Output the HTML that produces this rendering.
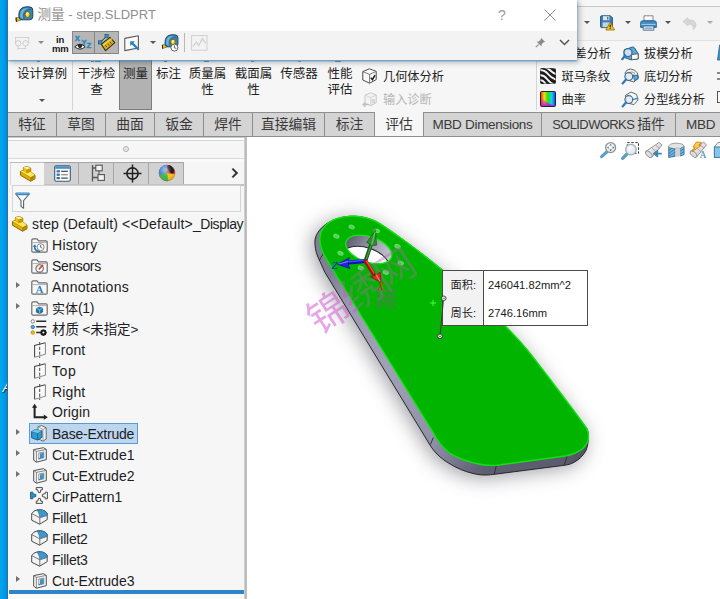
<!DOCTYPE html>
<html><head><meta charset="utf-8">
<style>
*{box-sizing:border-box;margin:0;padding:0}
html,body{width:720px;height:599px;overflow:hidden;background:#fff}
body{position:relative;font-family:"Liberation Sans","Noto Sans CJK SC",sans-serif;font-size:14px;color:#222}
.abs{position:absolute}
svg{position:absolute;overflow:visible}
#strip{left:0;top:0;width:8px;height:599px;background:linear-gradient(90deg,#00a8ee 0,#0098e8 60%,#0088dc 88%,#3a6c94 94%,#dfe6ec 100%)}
#app{left:8px;top:0;width:712px;height:599px;background:#f6f6f6}
#qat{left:577px;top:6px;width:143px;height:35px;background:#f3f3f3;border-top:1px solid #c8c8c8;border-bottom:1px solid #e2e2e2}
#ribbon{left:8px;top:41px;width:712px;height:71px;background:#f6f6f6}
#tabs{left:8px;top:112px;width:712px;height:25px;background:#d4d4d4;border-top:1px solid #8e8e8e;border-bottom:1px solid #9a9a9a}
.tab{position:absolute;top:0;height:23px;border-right:1px solid #8e8e8e;text-align:center;font-size:13.8px;line-height:24.6px;color:#3a3a3a;white-space:nowrap}
.tab.act{background:#f6f6f6;top:-1px;height:25px;padding-top:1px}
.tab.en{font-size:13.5px;letter-spacing:-0.3px}
#dlg{left:8px;top:0;width:569px;height:60px;background:#f3f3f3;box-shadow:0 1px 1.5px rgba(60,150,210,.9),2px 2px 6px rgba(0,0,0,.3)}
#dlgtitle{left:0;top:0;width:569px;height:31px;background:#fff}
#panel{left:8px;top:136px;width:237px;height:463px;background:#f6f6f6}
#vsep{left:244px;top:136px;width:3px;height:463px;background:linear-gradient(90deg,#dcdcdc,#b8b8b8 50%,#c8c8c8)}
#view{left:247px;top:136px;width:473px;height:463px;background:#fff}
.row{position:absolute;left:44px;height:21px;line-height:21px;margin-top:.8px;font-size:14px;white-space:nowrap;color:#1c1c24;transform-origin:0 50%}
.rb{position:absolute;font-size:12.5px;line-height:16.4px;margin-top:.3px;text-align:center;color:#222;white-space:nowrap;transform:translateX(-50%)}
.rl{position:absolute;margin-top:.8px;font-size:12.2px;line-height:16px;color:#222;white-space:nowrap}
.exp{position:absolute;left:8.4px;margin-top:-.6px;width:0;height:0;border-left:4px solid #707070;border-top:3.5px solid transparent;border-bottom:3.5px solid transparent}
.dd{position:absolute;width:0;height:0;border-top:3.5px solid #555;border-left:3px solid transparent;border-right:3px solid transparent}
.ptab{position:absolute;top:26px;height:23px;width:35px;background:#d2d2d2;border:1px solid #a6a6a6;border-left:none}
.co{font-size:11.2px;line-height:16px;color:#1a1a1a;white-space:nowrap}
</style></head><body>
<div id="strip" class="abs"></div>
<div class="abs" style="left:0;top:380px;width:7.4px;height:16px;overflow:hidden"><span style="position:absolute;left:2.6px;top:0;font-size:13px;line-height:16px;color:#fff;text-shadow:.6px .8px .8px #201000;font-style:italic">A</span></div>
<div id="app" class="abs"></div>
<div id="qat" class="abs"></div>
<div id="ribbon" class="abs">
<!--RB0--><div class="abs" style="left:29px;top:19.6px;width:3px;height:1.4px;background:#555;opacity:.6"></div>
<div class="abs" style="left:83px;top:19.6px;width:3px;height:1.4px;background:#d04030;opacity:.7"></div>
<div class="abs" style="left:87px;top:19.6px;width:6px;height:1.4px;background:#2a6a9a;opacity:.7"></div>
<div class="abs" style="left:120px;top:19.6px;width:3px;height:1.6px;background:#444;opacity:.6"></div>
<div class="abs" style="left:156px;top:19.6px;width:3px;height:1.4px;background:#444;opacity:.6"></div>
<div class="abs" style="left:196px;top:19.6px;width:5px;height:1.6px;background:#2a6a9a;opacity:.7"></div>
<div class="abs" style="left:243px;top:19.6px;width:3px;height:1.4px;background:#555;opacity:.6"></div>
<div class="abs" style="left:290px;top:19.6px;width:3px;height:1.4px;background:#555;opacity:.5"></div>
<div class="abs" style="left:327px;top:19.6px;width:6px;height:1.6px;background:#444;opacity:.6"></div>
<!-- ribbon origin abs (8,41) -->
<div class="abs" style="left:111px;top:18px;width:33px;height:51px;background:#b2b2b2;border:1px solid #7e7e7e"></div>
<div class="abs" style="left:64px;top:20px;width:1px;height:49px;background:#d4d4d4"></div>
<div class="abs" style="left:528px;top:20px;width:1px;height:49px;background:#d4d4d4"></div>
<div class="rb" style="left:34px;top:24.5px">设计算例</div>
<div class="dd" style="left:31px;top:58px"></div>
<div class="rb" style="left:88.5px;top:24.5px">干涉检<br>查</div>
<div class="rb" style="left:127.5px;top:24.5px">测量</div>
<div class="rb" style="left:160.5px;top:24.5px">标注</div>
<div class="rb" style="left:199.5px;top:24.5px">质量属<br>性</div>
<div class="rb" style="left:245.5px;top:24.5px">截面属<br>性</div>
<div class="rb" style="left:291px;top:24.5px">传感器</div>
<div class="rb" style="left:332px;top:24.5px">性能<br>评估</div>
<div class="rl" style="left:375px;top:27px">几何体分析</div>
<div class="rl" style="left:375px;top:50px;color:#b4b4b4">输入诊断</div>
<div class="rl" style="left:566.5px;top:4px">差分析</div>
<div class="rl" style="left:636px;top:4px">拔模分析</div>
<div class="rl" style="left:553.5px;top:27px">斑马条纹</div>
<div class="rl" style="left:636px;top:27px">底切分析</div>
<div class="rl" style="left:553.5px;top:50px">曲率</div>
<div class="rl" style="left:636px;top:50px">分型线分析</div>
<!-- geometry analysis icon abs 362..376 x 68..83 -->
<svg style="left:354px;top:27px" width="15" height="16" viewBox="0 0 15 16"><path d="M.8 3.6 L7.4 .8 L14.2 3.4 V11.6 L7.6 15.2 L.8 12Z" fill="#fafafa" stroke="#4a4a4a" stroke-width="1" stroke-linejoin="round"/><path d="M.8 3.6 L7.6 6.4 L14.2 3.4 M7.6 6.4 V15.2" fill="none" stroke="#6a6a6a" stroke-width=".9"/><path d="M8.8 9.6 L10.4 11.6 L13 7.2" fill="none" stroke="#1a1a1a" stroke-width="1.5"/></svg>
<svg style="left:354px;top:51px;opacity:.5" width="15" height="16" viewBox="0 0 15 16"><path d="M3 3.2 L8.6 .8 L14.2 3 V10.6 L8.8 13.6 L3 11Z" fill="#f4f4f4" stroke="#9a9a9a" stroke-width="1" stroke-linejoin="round"/><path d="M3 3.2 L8.8 5.6 L14.2 3 M8.8 5.6 V13.6" fill="none" stroke="#aaa" stroke-width=".9"/><path d="M7 12.6 H1.4 M3.4 10.4 L1 12.6 L3.4 14.8" fill="none" stroke="#8a8a8a" stroke-width="1.3"/><rect x="9.6" y="7" width="3.4" height="4.4" fill="#bbb"/></svg>
<!-- zebra icon abs 540..555.5 x 68..83.3 -->
<svg style="left:532px;top:27px" width="16" height="16" viewBox="0 0 16 16"><defs><clipPath id="zc"><rect x=".5" y=".5" width="15" height="15" rx="1"/></clipPath></defs><rect x=".5" y=".5" width="15" height="15" rx="1" fill="#1c1c1c" stroke="#2a2a2a" stroke-width="1"/><g clip-path="url(#zc)" fill="none" stroke="#f4f4f4" stroke-width="1.9"><path d="M-1 2 Q5 2 8 6 T17 12"/><path d="M-1 7 Q4 7 7 11 T15 17"/><path d="M-1 12 Q3 12 5 15 T9 19"/><path d="M4 -1 Q8 0 11 3 T17 6"/><path d="M10 -1 Q13 -1 17 1"/></g></svg>
<!-- curvature icon abs 540..555.5 x 91..106.4 -->
<svg style="left:532px;top:50px" width="16" height="16" viewBox="0 0 16 16"><defs><linearGradient id="cg1" x1="0" y1="0" x2="1" y2="0"><stop offset="0" stop-color="#ff1e1e"/><stop offset=".25" stop-color="#f0e000"/><stop offset=".5" stop-color="#20e020"/><stop offset=".75" stop-color="#10d0f0"/><stop offset="1" stop-color="#2030ff"/></linearGradient><linearGradient id="cg2" x1="0" y1="0" x2="0" y2="1"><stop offset="0" stop-color="#ff00c0" stop-opacity="0"/><stop offset="1" stop-color="#c000ff" stop-opacity=".85"/></linearGradient></defs><rect x=".5" y=".5" width="15" height="15" rx="1" fill="url(#cg1)" stroke="#222" stroke-width="1"/><path d="M1 15 L1 6 Q6 12 15 15Z" fill="url(#cg2)"/></svg>
<!-- draft / undercut / parting line analysis icons abs x 621..638 -->
<svg style="left:613px;top:4px" width="18" height="16" viewBox="0 0 18 16"><path d="M3.2 4.8 L11.6 2 Q13 2 13.6 3 L17.2 8.8 V13.8 L10 14.8 L3 12.4Z" fill="#5ea6d6" stroke="#1f5f8e" stroke-width="1" stroke-linejoin="round"/><path d="M10.6 9.6 L17.2 8.8 V13.8 L10.6 14.8Z" fill="#fdfdfd" stroke="#4a4a4a" stroke-width=".8"/><circle cx="7" cy="7.6" r="4" fill="#d8ecf8" fill-opacity=".85" stroke="#3a6a90" stroke-width="1.2"/><path d="M4.2 10.6 L1.2 14.2" stroke="#2d78b8" stroke-width="2.2" stroke-linecap="round"/></svg>
<svg style="left:613px;top:27px" width="18" height="17" viewBox="0 0 18 17"><path d="M4 5 Q5 1.4 9.6 1 Q14 1.2 16.4 5 L17.4 10 L13 14 L6 12Z" fill="#f0f0f0" stroke="#6a6a6a" stroke-width="1" stroke-linejoin="round"/><path d="M12.4 7 L17 7.6 L17 11 L13.4 12.6Z" fill="#5ea6d6" stroke="#1f5f8e" stroke-width=".8"/><path d="M8 4.6 Q11 3 14 5.4" fill="none" stroke="#888" stroke-width=".8"/><circle cx="7.8" cy="8.6" r="3.9" fill="#d8ecf8" fill-opacity=".85" stroke="#4a6a86" stroke-width="1.2"/><path d="M5 11.6 L1.6 15.4" stroke="#2d78b8" stroke-width="2.2" stroke-linecap="round"/></svg>
<svg style="left:613px;top:50px" width="18" height="17" viewBox="0 0 18 17"><path d="M4.4 4.4 L10 1 L15.6 3.4 L17 9 L13 13.6 L6 12Z" fill="#f4f4f4" stroke="#6a6a6a" stroke-width="1" stroke-linejoin="round"/><path d="M11.6 8.6 L17.2 7.2" stroke="#3a8cc8" stroke-width="1.4"/><circle cx="7.8" cy="8.6" r="3.9" fill="#d8ecf8" fill-opacity=".85" stroke="#4a6a86" stroke-width="1.2"/><path d="M5 11.6 L1.6 15.4" stroke="#2d78b8" stroke-width="2.2" stroke-linecap="round"/></svg>
<!-- far right partial icons -->
<svg style="left:708.6px;top:3px" width="6" height="17" viewBox="0 0 6 17"><path d="M2.6 1 L6 1 V16 H0.5Z" fill="#3f8fc6" stroke="#1f5f90" stroke-width=".8"/></svg>
<div class="abs" style="left:709px;top:31px;width:4px;height:1.5px;background:#888"></div>
<div class="abs" style="left:709px;top:37px;width:4px;height:1.5px;background:#888"></div>

<div class="abs" style="left:708.6px;top:50px;width:8px;height:12px;border:1px solid #555;background:#fafafa"></div>
<!--RB1-->
</div>
<div id="qaticons" class="abs" style="left:0;top:0;width:720px;height:45px">
<div class="dd" style="left:583.7px;top:21px"></div>
<div class="dd" style="left:624.5px;top:21px"></div>
<div class="dd" style="left:665.4px;top:21px"></div>
<div class="dd" style="left:707px;top:21px;border-top-color:#aaa"></div>
<!-- save abs 600..613 x 15.5..30 -->
<svg style="left:600px;top:15px" width="16" height="16" viewBox="0 0 16 16"><path d="M.6 1.8 Q.6 .8 1.6 .8 H10.4 L12.4 2.8 V11.6 Q12.4 12.6 11.4 12.6 H1.6 Q.6 12.6 .6 11.6Z" fill="#3e7fb6" stroke="#1c4a74" stroke-width=".9"/><rect x="3" y="1.2" width="6.4" height="4" fill="#dfe6ec"/><rect x="7" y="1.8" width="1.5" height="2.8" fill="#3e7fb6"/><rect x="2.6" y="7.4" width="7.8" height="4.8" fill="#c4d4e2"/><path d="M10.2 7.2 L14.6 15 H5.8Z" fill="#f6c21a" stroke="#9a6c00" stroke-width=".8" stroke-linejoin="round"/><path d="M10.2 9.8 V12.4 M10.2 13.2 V14" stroke="#222" stroke-width="1.2"/></svg>
<!-- print abs 640..657 x 15..30.7 -->
<svg style="left:640px;top:15px" width="17" height="16" viewBox="0 0 17 16"><path d="M4 .8 H13 V6 H4Z" fill="#fafafa" stroke="#7a7a7a" stroke-width=".9"/><path d="M.7 7.6 Q.7 5.8 2.6 5.8 H14.4 Q16.3 5.8 16.3 7.6 V12.4 H.7Z" fill="#3f8ec6" stroke="#1d5a8a" stroke-width=".9"/><path d="M1.4 9.4 H15.6" stroke="#9fd0f0" stroke-width="1"/><path d="M3.2 11 H13.8 V15.2 H3.2Z" fill="#e6eef4" stroke="#3a6a92" stroke-width=".9"/><path d="M4.6 13.2 H12.4" stroke="#3a6a92" stroke-width=".8"/></svg>
<!-- undo gray abs 681.8..696 x 17.3..29.3 -->
<svg style="left:681.5px;top:17px" width="15" height="13" viewBox="0 0 15 13"><path d="M.8 4.4 L6 .6 V2.8 Q14 2.4 14 8.2 Q14 10.8 11.2 12.6 Q12 7.2 6 7 V9Z" fill="#d6d6d6" stroke="#cacaca" stroke-width=".6" stroke-linejoin="round"/></svg>
</div>
<div id="tabs" class="abs">
 <div class="tab" style="left:0;width:49px">特征</div>
 <div class="tab" style="left:49px;width:49px">草图</div>
 <div class="tab" style="left:98px;width:49px">曲面</div>
 <div class="tab" style="left:147px;width:49px">钣金</div>
 <div class="tab" style="left:196px;width:49px">焊件</div>
 <div class="tab" style="left:245px;width:72px">直接编辑</div>
 <div class="tab" style="left:317px;width:50px">标注</div>
 <div class="tab act" style="left:367px;width:49px">评估</div>
 <div class="tab en" style="left:416px;width:118px">MBD Dimensions</div>
 <div class="tab en" id="swt" style="left:534px;width:134px;font-size:13px;letter-spacing:-.6px">SOLIDWORKS <span style="font-size:13.8px;letter-spacing:0">插件</span></div>
 <div class="tab en" style="left:668px;width:60px;text-align:left;padding-left:10px">MBD</div>
</div>
<div id="panel" class="abs">
<div class="abs" style="left:0;top:1px;width:236px;height:3px;background:#fff"></div>
<div class="abs" style="left:0;top:4px;width:236px;height:1px;background:#d6d6d6"></div>
<div class="abs" style="left:0;top:22px;width:236px;height:1px;background:#dadada"></div>
<div class="abs" style="left:0;top:23px;width:236px;height:3px;background:#fbfbfb"></div>
<div class="abs" style="left:115px;top:10px;width:6px;height:6px;border:1px solid #b0b0b0;border-radius:50%;background:#e8e8e8"></div>
<!-- panel tabs -->
<div class="abs" style="left:2px;top:26px;width:174px;height:1px;background:#bdbdbd"></div>
<div class="ptab" style="left:36px"></div>
<div class="ptab" style="left:71px"></div>
<div class="ptab" style="left:106px"></div>
<div class="ptab" style="left:141px"></div>
<div class="abs" style="left:2px;top:27px;width:1px;height:22px;background:#d8d8d8"></div>
<div class="abs" style="left:36px;top:48px;width:200px;height:1.5px;background:#c2c2c2"></div>
<!-- part icon tab -->
<svg style="left:11.9px;top:29.6px" width="15.2" height="15.6" viewBox="0 0 15.2 15.6"><path d="M.5,5.5 L3.4,4.4 V1.6 L7.3,.5 L10.7,2.2 V5.8 L15,9.2 V12.8 L10.6,15.3 L.5,9.2Z" fill="#e2ae00" stroke="#8a6800" stroke-width="1" stroke-linejoin="round"/><path d="M.5,5.5 L3.4,4.4 V5.2 L6.8,7.2 L10.7,5.8 L15,9.2 L10.6,11.6Z" fill="#ffe75e"/><path d="M3.4,1.6 L7.3,.5 L10.7,2.2 L6.8,3.5Z" fill="#fff3a0"/><path d="M6.8,3.5 L10.7,2.2 V5.8 L6.8,7.2Z" fill="#c99a00"/><path d="M3.4,1.6 L6.8,3.5 V7.2 L3.4,5.2Z" fill="#f0c010"/><path d="M10.6,11.6 L15,9.2 V12.8 L10.6,15.3Z" fill="#b88a00"/><path d="M10.6,11.6 V15.3 M6.8,3.5 V7.2 M.5,5.5 L10.6,11.6 L15,9.2" fill="none" stroke="#9a7600" stroke-width=".5"/></svg>
<!-- property manager icon -->
<svg style="left:46px;top:29px" width="17" height="17" viewBox="0 0 17 17"><rect x=".7" y=".7" width="15.6" height="15.6" rx="1.5" fill="#fdfdfd" stroke="#3a5a78" stroke-width="1.1"/><rect x="1.2" y="1.2" width="14.6" height="2.6" fill="#4a90c8"/><rect x="2.6" y="5.2" width="3.2" height="2.2" fill="#2f6fa8"/><rect x="2.6" y="8.6" width="3.2" height="2.2" fill="#2f6fa8"/><rect x="2.6" y="12" width="3.2" height="2.2" fill="#2f6fa8"/><rect x="7.2" y="5.7" width="6.6" height="1.2" fill="#444"/><rect x="7.2" y="9.1" width="6.6" height="1.2" fill="#888"/><rect x="7.2" y="12.5" width="6.6" height="1.2" fill="#444"/></svg>
<!-- configuration manager icon -->
<svg style="left:82px;top:28px" width="16" height="19" viewBox="0 0 16 19"><path d="M2.5 1 V17.5 M2.5 4 H6 M2.5 13.5 H8" fill="none" stroke="#555" stroke-width="1.3"/><rect x="5.8" y="1.2" width="6.4" height="5.6" fill="#f4f4f4" stroke="#555" stroke-width="1.1"/><rect x="8" y="10.6" width="6.4" height="5.8" fill="#f4f4f4" stroke="#555" stroke-width="1.1"/><path d="M9 6.8 V10.6" stroke="#555" stroke-width="1.1"/></svg>
<!-- dimxpert icon -->
<svg style="left:115px;top:28px" width="19" height="19" viewBox="0 0 19 19"><circle cx="9.5" cy="9.5" r="5.6" fill="none" stroke="#222" stroke-width="1.6"/><path d="M9.5 0.5 V18.5 M0.5 9.5 H18.5" stroke="#222" stroke-width="1.5"/></svg>
<!-- display manager icon -->
<svg style="left:150px;top:28px" width="18" height="18" viewBox="0 0 18 18"><defs><clipPath id="dmc"><circle cx="9" cy="9" r="8.2"/></clipPath><radialGradient id="dmg" cx=".4" cy=".3" r=".8"><stop offset="0" stop-color="#fff" stop-opacity=".55"/><stop offset=".5" stop-color="#fff" stop-opacity="0"/><stop offset="1" stop-color="#000" stop-opacity=".35"/></radialGradient></defs><g clip-path="url(#dmc)"><rect width="18" height="18" fill="#e23a2a"/><path d="M0 0 H9 L9 9 L0 12Z" fill="#3b7fd6"/><path d="M0 11 L9 9 L11 18 H0Z" fill="#3cb44a"/><path d="M9 9 L18 10 V18 H10.5Z" fill="#f4c20d"/><path d="M9 9 L18 2 V10.5Z" fill="#e23a2a"/><ellipse cx="12.8" cy="5.2" rx="2.6" ry="4.6" transform="rotate(-35 12.8 5.2)" fill="#1a1a1a"/></g><circle cx="9" cy="9" r="8.2" fill="url(#dmg)"/></svg>
<!-- chevron -->
<svg style="left:222.8px;top:30.8px" width="8" height="12" viewBox="0 0 8 12"><path d="M1.4 1.6 L5.8 6 L1.4 10.4" fill="none" stroke="#333" stroke-width="2"/></svg>
<!-- filter box -->
<div class="abs" style="left:4px;top:49px;width:229px;height:27px;border:1px solid #d4d4d4;background:#f7f7f7"></div>
<svg style="left:6.9px;top:55.6px" width="15" height="17" viewBox="0 0 15 17"><path d="M.8 2 L6 8.6 V14.4 L8.6 16.2 V8.6 L14.2 2Z" fill="#fbfdfe" stroke="#5a6670" stroke-width="1.1" stroke-linejoin="round"/><rect x=".3" y=".4" width="14.4" height="2.8" rx="1.4" fill="#3a8abf"/><path d="M1.6 1.2 H13.4" stroke="#8cc8ea" stroke-width=".7"/></svg>
<!-- tree -->
<svg style="left:4.4px;top:79.6px" width="15.2" height="15.6" viewBox="0 0 15.2 15.6"><path d="M.5,5.5 L3.4,4.4 V1.6 L7.3,.5 L10.7,2.2 V5.8 L15,9.2 V12.8 L10.6,15.3 L.5,9.2Z" fill="#e2ae00" stroke="#8a6800" stroke-width="1" stroke-linejoin="round"/><path d="M.5,5.5 L3.4,4.4 V5.2 L6.8,7.2 L10.7,5.8 L15,9.2 L10.6,11.6Z" fill="#ffe75e"/><path d="M3.4,1.6 L7.3,.5 L10.7,2.2 L6.8,3.5Z" fill="#fff3a0"/><path d="M6.8,3.5 L10.7,2.2 V5.8 L6.8,7.2Z" fill="#c99a00"/><path d="M3.4,1.6 L6.8,3.5 V7.2 L3.4,5.2Z" fill="#f0c010"/><path d="M10.6,11.6 L15,9.2 V12.8 L10.6,15.3Z" fill="#b88a00"/><path d="M10.6,11.6 V15.3 M6.8,3.5 V7.2 M.5,5.5 L10.6,11.6 L15,9.2" fill="none" stroke="#9a7600" stroke-width=".5"/></svg>
<div class="row" id="r0" style="left:24px;top:77px;width:213px;overflow:hidden"><span id="r0a" style="letter-spacing:.14px">step (Default) </span><span id="r0b" style="letter-spacing:.2px">&lt;&lt;Default&gt;</span><span id="r0c" style="letter-spacing:-.45px">_Display</span> State</div>
<div class="row" id="r1" style="letter-spacing:0.27px;top:98px">History</div>
<div class="row" id="r2" style="letter-spacing:-0.37px;top:119px">Sensors</div>
<div class="row" id="r3" style="letter-spacing:0.28px;top:140px">Annotations</div>
<div class="row" id="r4" style="top:161px"><span style="font-size:13px">实体</span><span style="letter-spacing:-.4px">(1)</span></div>
<div class="row" id="r5" style="top:182px"><span style="font-size:13.4px">材质 &lt;未指定&gt;</span></div>
<div class="row" id="r6" style="letter-spacing:0.14px;top:203px">Front</div>
<div class="row" id="r7" style="letter-spacing:0.60px;top:224px">Top</div>
<div class="row" id="r8" style="letter-spacing:0.14px;top:245px">Right</div>
<div class="row" id="r9" style="letter-spacing:0.15px;top:265px">Origin</div>
<div class="abs" style="left:21px;top:287px;width:109px;height:21px;background:#bcd6ee;border:1px solid #5b9bd5"></div>
<div class="row" id="r10" style="letter-spacing:-0.23px;top:287px">Base-Extrude</div>
<div class="row" id="r11" style="letter-spacing:0.00px;top:308px">Cut-Extrude1</div>
<div class="row" id="r12" style="letter-spacing:0.00px;top:329px">Cut-Extrude2</div>
<div class="row" id="r13" style="letter-spacing:-0.05px;top:350px">CirPattern1</div>
<div class="row" id="r14" style="letter-spacing:-0.24px;top:371px">Fillet1</div>
<div class="row" id="r15" style="letter-spacing:-0.24px;top:392px">Fillet2</div>
<div class="row" id="r16" style="letter-spacing:-0.24px;top:413px">Fillet3</div>
<div class="row" id="r17" style="letter-spacing:0.00px;top:434px">Cut-Extrude3</div>
<div class="exp" style="top:147px"></div>
<div class="exp" style="top:168px"></div>
<div class="exp" style="top:294px"></div>
<div class="exp" style="top:315px"></div>
<div class="exp" style="top:336px"></div>
<div class="exp" style="top:441px"></div>
<div class="abs" style="left:1px;top:454px;width:236px;height:4px;background:#2e86c8"></div><div class="abs" style="left:0;top:458px;width:237px;height:5px;background:#fafafa"></div>
<!--TI0--><svg style="left:23px;top:102px" width="17" height="15" viewBox="0 0 17 15"><path d="M.8 2.4 Q.8 .8 2.2 .8 H6 L7.6 2.8 H15 Q16.2 2.8 16.2 4 V13 Q16.2 14.2 15 14.2 H2 Q.8 14.2 .8 13Z" fill="#f8f8f8" stroke="#6c6c6c" stroke-width="1.2" stroke-linejoin="round"/><path d="M1.4 4.6 H15.6" stroke="#9a9a9a" stroke-width=".8"/><circle cx="9.6" cy="9.2" r="3.5" fill="#fff" stroke="#7a7a7a" stroke-width=".9"/><path d="M9.6 7 V9.3 L11.4 10.2" fill="none" stroke="#444" stroke-width=".8"/><path d="M3.6 8.2 A4.6 4.6 0 0 0 9 13.4" fill="none" stroke="#2a78b6" stroke-width="1.6"/><path d="M1.8 8.8 L3.7 6.2 L5.8 8.9Z" fill="#2a78b6"/></svg>
<svg style="left:23px;top:123px" width="17" height="15" viewBox="0 0 17 15"><path d="M.8 2.4 Q.8 .8 2.2 .8 H6 L7.6 2.8 H15 Q16.2 2.8 16.2 4 V13 Q16.2 14.2 15 14.2 H2 Q.8 14.2 .8 13Z" fill="#f8f8f8" stroke="#6c6c6c" stroke-width="1.2" stroke-linejoin="round"/><path d="M1.4 4.6 H15.6" stroke="#9a9a9a" stroke-width=".8"/><circle cx="8.6" cy="9.4" r="3.7" fill="#fff" stroke="#666" stroke-width="1.1"/><path d="M8.2 10 L11.6 6.4" stroke="#e03a1e" stroke-width="1.6" stroke-linecap="round"/><path d="M5.6 9.6 A3 3 0 0 1 8 6.6" fill="none" stroke="#999" stroke-width=".7"/></svg>
<svg style="left:23px;top:144px" width="17" height="15" viewBox="0 0 17 15"><path d="M.8 2.4 Q.8 .8 2.2 .8 H6 L7.6 2.8 H15 Q16.2 2.8 16.2 4 V13 Q16.2 14.2 15 14.2 H2 Q.8 14.2 .8 13Z" fill="#f8f8f8" stroke="#6c6c6c" stroke-width="1.2" stroke-linejoin="round"/><path d="M1.4 4.6 H15.6" stroke="#9a9a9a" stroke-width=".8"/><text x="8.6" y="13.2" text-anchor="middle" font-family="Liberation Serif,serif" font-weight="bold" font-size="10.5" fill="#2e7fb8">A</text></svg>
<svg style="left:23px;top:165px" width="17" height="15" viewBox="0 0 17 15"><path d="M.8 2.4 Q.8 .8 2.2 .8 H6 L7.6 2.8 H15 Q16.2 2.8 16.2 4 V13 Q16.2 14.2 15 14.2 H2 Q.8 14.2 .8 13Z" fill="#f8f8f8" stroke="#6c6c6c" stroke-width="1.2" stroke-linejoin="round"/><path d="M1.4 4.6 H15.6" stroke="#9a9a9a" stroke-width=".8"/><path d="M5.4 7.4 L8.4 6.2 L11.6 7.2 L11.6 11 L8.6 12.6 L5.4 11.2Z" fill="#1f78b0" stroke="#0f4f7c" stroke-width=".7" stroke-linejoin="round"/><path d="M5.4 7.4 L8.6 8.6 L11.6 7.2 M8.6 8.6 V12.6" fill="none" stroke="#9ad0ee" stroke-width=".7"/></svg>
<svg style="left:22px;top:183px" width="18" height="17" viewBox="0 0 18 17"><circle cx="2.8" cy="2.4" r="1.7" fill="#fff" stroke="#777" stroke-width=".9"/><circle cx="2.8" cy="8" r="1.7" fill="#4aa8dc" stroke="#2a6f9c" stroke-width=".8"/><circle cx="2.8" cy="13.5" r="1.7" fill="#f2c200" stroke="#a88400" stroke-width=".8"/><path d="M6.2 2.2 H16.2 M6.2 7.8 H16.2 M6.2 13.4 H10.4" stroke="#2a2a2a" stroke-width="1.5"/><circle cx="13.4" cy="13.6" r="2.2" fill="none" stroke="#1a1a1a" stroke-width="1.8"/><path d="M13.4 10.4 V16.8 M10.2 13.6 H16.6 M11.1 11.3 L15.7 15.9 M15.7 11.3 L11.1 15.9" stroke="#1a1a1a" stroke-width="1.1"/><circle cx="13.4" cy="13.6" r="1" fill="#f6f6f6"/></svg>
<svg style="left:26px;top:205.5px" width="13" height="16" viewBox="0 0 13 16"><path d="M.6 3.4 L11.4 .8 V12.2 L.6 15.2Z" fill="#fbfbfb"/><path d="M.6 15.2 V3.4 L11.4 .8" fill="none" stroke="#4a4a4a" stroke-width="1.1"/><path d="M11.4 .8 V12.2 L.6 15.2" fill="none" stroke="#8c8c8c" stroke-width="1.1"/><path d="M5.7 0 V16" stroke="#4a4a4a" stroke-width="1" stroke-dasharray="3.2 1.6"/></svg>
<svg style="left:26px;top:226.5px" width="13" height="16" viewBox="0 0 13 16"><path d="M.6 3.4 L11.4 .8 V12.2 L.6 15.2Z" fill="#fbfbfb"/><path d="M.6 15.2 V3.4 L11.4 .8" fill="none" stroke="#4a4a4a" stroke-width="1.1"/><path d="M11.4 .8 V12.2 L.6 15.2" fill="none" stroke="#8c8c8c" stroke-width="1.1"/><path d="M5.7 0 V16" stroke="#4a4a4a" stroke-width="1" stroke-dasharray="3.2 1.6"/></svg>
<svg style="left:26px;top:247.5px" width="13" height="16" viewBox="0 0 13 16"><path d="M.6 3.4 L11.4 .8 V12.2 L.6 15.2Z" fill="#fbfbfb"/><path d="M.6 15.2 V3.4 L11.4 .8" fill="none" stroke="#4a4a4a" stroke-width="1.1"/><path d="M11.4 .8 V12.2 L.6 15.2" fill="none" stroke="#8c8c8c" stroke-width="1.1"/><path d="M5.7 0 V16" stroke="#4a4a4a" stroke-width="1" stroke-dasharray="3.2 1.6"/></svg>
<svg style="left:24px;top:268px" width="16" height="16" viewBox="0 0 16 16"><path d="M2.6 2 V13.2 H14" fill="none" stroke="#222" stroke-width="2"/><path d="M2.6 -.2 L5.2 3.8 H0Z M15.8 13.2 L11.8 10.6 V15.8Z" fill="#222"/></svg>
<svg style="left:23px;top:289px" width="16" height="17" viewBox="0 0 16 17"><path d="M7 1.6 L10.4 .6 L15.2 2.8 V14 L12 16.2 L7 13.6Z" fill="#f4f4f4" stroke="#5a5a5a" stroke-width=".9" stroke-linejoin="round"/><path d="M12 4.6 L15.2 2.8 M12 4.6 V16.2 M12 4.6 L7 1.6" fill="none" stroke="#8a8a8a" stroke-width=".8"/><path d="M.6 6.6 L4.4 4.6 L11 5.8 V12.4 L6.6 15 L.6 12.8Z" fill="#2f9ad0" stroke="#115a88" stroke-width=".9" stroke-linejoin="round"/><path d="M.6 6.6 L6.6 8.2 L11 5.8 M6.6 8.2 V15" fill="none" stroke="#0f5a8a" stroke-width=".8"/><path d="M.6 6.6 L4.4 4.6 L11 5.8 L6.6 8.2Z" fill="#6cc4ea"/></svg>
<svg style="left:25px;top:310.5px" width="14" height="16" viewBox="0 0 14 16"><path d="M.7 2.6 L10.4 .7 L13.3 2.4 V12.6 L3.4 15.2 L.7 13.2Z" fill="#f6f6f6" stroke="#505050" stroke-width="1" stroke-linejoin="round"/><path d="M.7 2.6 L3.4 4.4 L13.3 2.4 M3.4 4.4 V15.2" fill="none" stroke="#6a6a6a" stroke-width=".8"/><path d="M5.8 6 L10.8 5 V10.8 L5.8 12Z" fill="#fff" stroke="#666" stroke-width=".7"/><path d="M7.6 6.4 L10.8 5.6 V10.8 L5.8 12 L7.6 10.4Z" fill="#3a96cc"/><path d="M7.6 6.4 V10.4 L5.8 12" fill="none" stroke="#16608e" stroke-width=".7"/></svg>
<svg style="left:25px;top:331.5px" width="14" height="16" viewBox="0 0 14 16"><path d="M.7 2.6 L10.4 .7 L13.3 2.4 V12.6 L3.4 15.2 L.7 13.2Z" fill="#f6f6f6" stroke="#505050" stroke-width="1" stroke-linejoin="round"/><path d="M.7 2.6 L3.4 4.4 L13.3 2.4 M3.4 4.4 V15.2" fill="none" stroke="#6a6a6a" stroke-width=".8"/><path d="M5.8 6 L10.8 5 V10.8 L5.8 12Z" fill="#fff" stroke="#666" stroke-width=".7"/><path d="M7.6 6.4 L10.8 5.6 V10.8 L5.8 12 L7.6 10.4Z" fill="#3a96cc"/><path d="M7.6 6.4 V10.4 L5.8 12" fill="none" stroke="#16608e" stroke-width=".7"/></svg>
<svg style="left:25px;top:436.5px" width="14" height="16" viewBox="0 0 14 16"><path d="M.7 2.6 L10.4 .7 L13.3 2.4 V12.6 L3.4 15.2 L.7 13.2Z" fill="#f6f6f6" stroke="#505050" stroke-width="1" stroke-linejoin="round"/><path d="M.7 2.6 L3.4 4.4 L13.3 2.4 M3.4 4.4 V15.2" fill="none" stroke="#6a6a6a" stroke-width=".8"/><path d="M5.8 6 L10.8 5 V10.8 L5.8 12Z" fill="#fff" stroke="#666" stroke-width=".7"/><path d="M7.6 6.4 L10.8 5.6 V10.8 L5.8 12 L7.6 10.4Z" fill="#3a96cc"/><path d="M7.6 6.4 V10.4 L5.8 12" fill="none" stroke="#16608e" stroke-width=".7"/></svg>
<svg style="left:22.2px;top:351.2px" width="18" height="17" viewBox="0 0 18 17"><g fill="#fafafa" stroke="#4a4a4a" stroke-width="1" stroke-linejoin="round"><path d="M6.2 .6 H12.4 V2.8 H10.8 L10.2 5.6 H8.4 L7.8 2.8 H6.2Z"/><path d="M6.2 16.4 H12.4 V14.2 H10.8 L10.2 11.4 H8.4 L7.8 14.2 H6.2Z"/><path d="M17.4 5.2 H15.2 V6.8 L12.4 7.4 V9.6 L15.2 10.2 V11.8 H17.4Z"/></g><path d="M.6 5.2 H2.8 V6.8 L5.8 7.4 V9.6 L2.8 10.2 V11.8 H.6Z" fill="#3a8cc6" stroke="#1d5f8e" stroke-width="1" stroke-linejoin="round"/></svg>
<svg style="left:22.6px;top:373.2px" width="17" height="16" viewBox="0 0 17 16"><path d="M.7 4.6 Q2.4 1.6 6.4 .8 Q12.4 -.2 16.2 4 V10.6 L8.6 15.2 L.7 11.2Z" fill="#f4f4f4" stroke="#4a4a4a" stroke-width="1" stroke-linejoin="round"/><path d="M6.2 1 Q12.2 .1 16 4 V6.4 L8.8 8.8 Q8.6 4.6 6.2 1Z" fill="#3f97cc" stroke="#1e6a9c" stroke-width=".6"/><path d="M.7 4.6 L8.8 8.8 V15.2" fill="none" stroke="#5a5a5a" stroke-width=".8"/><path d="M8.8 8.8 L16.2 6.4" stroke="#7a7a7a" stroke-width=".6"/></svg>
<svg style="left:22.6px;top:394.20000000000005px" width="17" height="16" viewBox="0 0 17 16"><path d="M.7 4.6 Q2.4 1.6 6.4 .8 Q12.4 -.2 16.2 4 V10.6 L8.6 15.2 L.7 11.2Z" fill="#f4f4f4" stroke="#4a4a4a" stroke-width="1" stroke-linejoin="round"/><path d="M6.2 1 Q12.2 .1 16 4 V6.4 L8.8 8.8 Q8.6 4.6 6.2 1Z" fill="#3f97cc" stroke="#1e6a9c" stroke-width=".6"/><path d="M.7 4.6 L8.8 8.8 V15.2" fill="none" stroke="#5a5a5a" stroke-width=".8"/><path d="M8.8 8.8 L16.2 6.4" stroke="#7a7a7a" stroke-width=".6"/></svg>
<svg style="left:22.6px;top:415.20000000000005px" width="17" height="16" viewBox="0 0 17 16"><path d="M.7 4.6 Q2.4 1.6 6.4 .8 Q12.4 -.2 16.2 4 V10.6 L8.6 15.2 L.7 11.2Z" fill="#f4f4f4" stroke="#4a4a4a" stroke-width="1" stroke-linejoin="round"/><path d="M6.2 1 Q12.2 .1 16 4 V6.4 L8.8 8.8 Q8.6 4.6 6.2 1Z" fill="#3f97cc" stroke="#1e6a9c" stroke-width=".6"/><path d="M.7 4.6 L8.8 8.8 V15.2" fill="none" stroke="#5a5a5a" stroke-width=".8"/><path d="M8.8 8.8 L16.2 6.4" stroke="#7a7a7a" stroke-width=".6"/></svg><!--TI1-->

</div>
<div id="vsep" class="abs"></div>
<div id="view" class="abs">
<!--VW0--><!-- view origin abs (247,136); svg uses absolute page coords via viewBox -->
<svg style="left:0;top:0" width="473" height="463" viewBox="247 136 473 463">
<defs>
<filter id="blur8" x="-30%" y="-30%" width="160%" height="160%"><feGaussianBlur stdDeviation="10"/></filter>
<linearGradient id="sideg" gradientUnits="userSpaceOnUse" x1="315" y1="300" x2="590" y2="470"><stop offset="0" stop-color="#808094"/><stop offset=".1" stop-color="#9a9ab0"/><stop offset=".3" stop-color="#a0a0b6"/><stop offset=".54" stop-color="#9090a8"/><stop offset=".72" stop-color="#5e5e72"/><stop offset=".92" stop-color="#5c5c6e"/><stop offset="1" stop-color="#484856"/></linearGradient>
<linearGradient id="wallg" gradientUnits="userSpaceOnUse" x1="346" y1="245" x2="392" y2="255"><stop offset="0" stop-color="#5e5e70"/><stop offset=".5" stop-color="#9a9aae"/><stop offset="1" stop-color="#c8c8d6"/></linearGradient>
<clipPath id="holeclip"><ellipse cx="368.8" cy="249.4" rx="24" ry="12.6" transform="rotate(19 368.8 249.4)"/></clipPath>
<clipPath id="topclip"><path d="M328.8,263 L432.6,431.5 C437,440 443,448 450,453.3 C458,458 468,462 480,464.2 C486,465.3 491,465.6 496.7,465.3 L566.7,455.8 C571,455 575,453.5 578.3,451.7 C583,449 586,445.5 587.5,441.7 C588.4,439.5 588.6,437.5 588.3,435.8 C588,432.5 587.6,430 586.7,428.3 C580,419 560,392 530,353.3 C500,316 440,266 400,237.5 C388,229 381,224 375,221 C362,215 347,215 337,218.7 C326,222 319,231 320,241 C320.2,247.5 322.6,253.5 328.8,263Z"/></clipPath>
</defs>
<!-- shadow -->
<path id="shadow" d="M315,240 C314.5,246 316,252 317.5,256 L325,272.5 L430,445 C433,450 438,456 445,460.8 C452,465.5 460,469.5 466.7,471.7 C474,474 480,475.2 485,475 C489,475 492,474.6 495,474.2 L564.2,465.3 C570,464.5 572,463.5 575,461.7 C579,459.5 583,456 585.8,450.8 C587.5,447 588.5,442 588.3,436 C588.3,432 587.6,430 586.7,428.3 L530,353.3 C500,316 440,266 400,237.5 C388,229 381,224 375,221 C362,215 347,215 337,218.7 C326,222 316,231 315,240Z" fill="#50505a" opacity=".55" filter="url(#blur8)" transform="translate(-3,3)"/>
<!-- body side -->
<path d="M315,240 C314.5,246 316,252 317.5,256 L325,272.5 L430,445 C433,450 438,456 445,460.8 C452,465.5 460,469.5 466.7,471.7 C474,474 480,475.2 485,475 C489,475 492,474.6 495,474.2 L564.2,465.3 C570,464.5 572,463.5 575,461.7 C579,459.5 583,456 585.8,450.8 C587.5,447 588.5,442 588.3,436 C588.3,432 587.6,430 586.7,428.3 L530,353.3 C500,316 440,266 400,237.5 C388,229 381,224 375,221 C362,215 347,215 337,218.7 C326,222 316,231 315,240Z" fill="url(#sideg)" stroke="#26262c" stroke-width="1" stroke-linejoin="round"/>
<!-- segment lines -->
<path d="M433.3,437.5 L430.5,444.4 M496.3,465.8 L494.2,474 M567.2,455.8 L564.2,465.2 M323.8,252.8 L319.3,260.3" stroke="#2a2a32" stroke-width=".9" fill="none"/>
<!-- watermark outside -->
<g opacity=".5" font-family="Noto Sans CJK SC,sans-serif" fill="#d050d0">
<text x="0" y="0" font-size="40" transform="translate(318.9,335.6) rotate(-33)">锦绣网</text>
</g>
<!-- top face -->
<path id="top" d="M328.8,263 L432.6,431.5 C437,440 443,448 450,453.3 C458,458 468,462 480,464.2 C486,465.3 491,465.6 496.7,465.3 L566.7,455.8 C571,455 575,453.5 578.3,451.7 C583,449 586,445.5 587.5,441.7 C588.4,439.5 588.6,437.5 588.3,435.8 C588,432.5 587.6,430 586.7,428.3 C580,419 560,392 530,353.3 C500,316 440,266 400,237.5 C388,229 381,224 375,221 C362,215 347,215 337,218.7 C326,222 319,231 320,241 C320.2,247.5 322.6,253.5 328.8,263Z" fill="#00b400" stroke="#12e212" stroke-width="1.4" stroke-linejoin="round"/>
<!-- hole -->
<ellipse cx="368.8" cy="249.4" rx="24" ry="12.6" transform="rotate(19 368.8 249.4)" fill="url(#wallg)"/>
<g clip-path="url(#holeclip)"><ellipse cx="366.2" cy="260.2" rx="23.6" ry="12.4" transform="rotate(19 366.2 260.2)" fill="#fff" stroke="#2a2a34" stroke-width="1"/></g>
<ellipse cx="368.8" cy="249.4" rx="24" ry="12.6" transform="rotate(19 368.8 249.4)" fill="none" stroke="#18e418" stroke-width="1.3"/>
<!-- small holes -->
<g fill="#6cc070" stroke="#58ec58" stroke-width="1">
<ellipse cx="351.7" cy="227" rx="2.7" ry="1.7" transform="rotate(20 351.7 227)"/>
<ellipse cx="336.3" cy="236.3" rx="2.7" ry="1.7" transform="rotate(20 336.3 236.3)"/>
<ellipse cx="340.5" cy="253.3" rx="2.7" ry="1.7" transform="rotate(20 340.5 253.3)"/>
<ellipse cx="360.8" cy="268" rx="2.7" ry="1.7" transform="rotate(20 360.8 268)"/>
<ellipse cx="385.8" cy="272.5" rx="2.7" ry="1.7" transform="rotate(20 385.8 272.5)"/>
<ellipse cx="400.8" cy="263" rx="2.7" ry="1.7" transform="rotate(20 400.8 263)"/>
<ellipse cx="397.5" cy="246.3" rx="2.7" ry="1.7" transform="rotate(20 397.5 246.3)"/>
<ellipse cx="376.7" cy="230.8" rx="2.7" ry="1.7" transform="rotate(20 376.7 230.8)"/>
</g>
<!-- watermark -->
<g clip-path="url(#topclip)" font-family="Noto Sans CJK SC,sans-serif">
<text x="0" y="0" font-size="40" transform="translate(318.9,335.6) rotate(-33)" fill="#a070a0" opacity=".42">锦绣网</text>
<text x="376" y="306.5" font-size="20" font-weight="bold" fill="#806080" opacity=".4">网</text>
</g>
<!-- triad -->
<path d="M365.4,261 L371.2,244" stroke="#145c14" stroke-width="3.8" stroke-linecap="round"/>
<path d="M365.8,260.6 L371.4,244" stroke="#3c9a3c" stroke-width="1.4"/>
<path d="M366.6,242.4 Q371.5,246.6 376.6,245.2 L375.4,230.6Z" fill="#2f8f2f" stroke="#145c14" stroke-width=".7" stroke-linejoin="round"/>
<path d="M371.6,245 L375.2,231.6" stroke="#7ccc7c" stroke-width="1.2" opacity=".8"/>
<path d="M365.4,261 L349,262.6" stroke="#1010b8" stroke-width="4" stroke-linecap="round"/>
<path d="M365.4,260.2 L349,261.8" stroke="#4a4aff" stroke-width="1.4"/>
<path d="M349.4,257.8 Q346.6,263 350,268.6 L337.4,264.2Z" fill="#2222e8" stroke="#0c0c98" stroke-width=".7" stroke-linejoin="round"/>
<path d="M348.6,261.4 L338.4,264" stroke="#8a8aff" stroke-width="1.2" opacity=".8"/>
<path d="M365.4,261 L373.6,274" stroke="#a41010" stroke-width="4" stroke-linecap="round"/>
<path d="M366.2,260.6 L374.2,273.4" stroke="#f05050" stroke-width="1.3"/>
<path d="M370.4,276.4 Q376,277 380.2,272 L380.8,282.6Z" fill="#dc2c2c" stroke="#8c0c0c" stroke-width=".7" stroke-linejoin="round"/>
<path d="M376,274.6 L380.2,281.4" stroke="#ff9090" stroke-width="1.1" opacity=".8"/>
<g font-family="Liberation Serif,serif" font-style="italic">
<text x="372.6" y="232.4" fill="#2a8a2a" font-size="8.5">Y</text>
<text x="331.6" y="268.6" fill="#1a1ae0" font-size="11">Z</text>
<text x="377.6" y="289.8" fill="#e02020" font-size="11">X</text>
</g>
<path d="M430,303 H436 M433,300 V306" stroke="#44ff44" stroke-width="1"/>
</svg>
<!-- callout abs 442.5..587.5 x 270.5..325.5 -->
<div class="abs" style="left:195px;top:134px;width:146px;height:56px;background:#fff;border:1px solid #4a4a4a"></div>
<div class="abs" style="left:196px;top:135px;width:41px;height:54px;background:#f2f2f2;border-right:1px solid #4a4a4a"></div>
<div class="abs co" style="left:203.5px;top:141px">面积:</div>
<div class="abs co" style="left:203.5px;top:168.5px">周长:</div>
<div class="abs co" id="v1" style="left:241px;top:141px">246041.82mm^2</div>
<div class="abs co" id="v2" style="left:241px;top:168.5px">2746.16mm</div>
<svg style="left:0;top:0" width="473" height="463" viewBox="247 136 473 463">
<path d="M443.4,300.4 L440.2,334" stroke="#3c3c3c" stroke-width="1" fill="none"/>
<circle cx="443.7" cy="298.3" r="2.3" fill="#f4f4f4" stroke="#333" stroke-width=".9"/>
<circle cx="440" cy="336.3" r="2.3" fill="#f4f4f4" stroke="#333" stroke-width=".9"/>
<path d="M442.6,298.3 H444.8 M438.9,336.3 H441.1" stroke="#333" stroke-width=".7"/>
</svg>
<!--VT0--><svg style="left:0;top:0" width="473" height="30" viewBox="247 136 473 30">
<defs><radialGradient id="lensg" cx=".4" cy=".35" r=".7"><stop offset="0" stop-color="#fbfdfe"/><stop offset="1" stop-color="#d4e2ea"/></radialGradient>
<pattern id="hatch" width="2.4" height="2.4" patternUnits="userSpaceOnUse" patternTransform="rotate(-35)"><rect width="2.4" height="2.4" fill="#7cbce4"/><rect width="2.4" height="1" fill="#2f7fb4"/></pattern>
<linearGradient id="scopeg" x1="0" y1="0" x2="1" y2="1"><stop offset="0" stop-color="#ffffff"/><stop offset="1" stop-color="#c4c4c4"/></linearGradient></defs>
<!-- zoom to fit -->
<path d="M607,151.8 L601.6,156.6" stroke="#5a9fc8" stroke-width="3.2" stroke-linecap="round"/>
<circle cx="610.6" cy="147.6" r="5" fill="url(#lensg)" stroke="#8e959a" stroke-width="1.3"/>
<path d="M610.6,144 L611.8,145.6 H609.4Z M610.6,151.2 L611.8,149.6 H609.4Z M607,147.6 L608.6,146.4 V148.8Z M614.2,147.6 L612.6,146.4 V148.8Z" fill="#555"/>
<!-- zoom to area -->
<rect x="627.3" y="142.6" width="11.2" height="10.8" fill="none" stroke="#333" stroke-width="1" stroke-dasharray="2.4 1.6"/>
<path d="M627,154 L622.6,158.4" stroke="#5a9fc8" stroke-width="3.2" stroke-linecap="round"/>
<circle cx="631" cy="149.6" r="5.3" fill="url(#lensg)" stroke="#a4aaae" stroke-width="1.3"/>
<!-- previous view -->
<path d="M659.2,142.4 L662.0,145.0 L652.0,157.2 L645.8,151.4Z" fill="url(#scopeg)" stroke="#8e8e8e" stroke-width=".9" stroke-linejoin="round"/><path d="M655.8,145.2 L659.4,148.4 M652.0,148.0 L656.6,152.2" stroke="#9a9a9a" stroke-width=".8"/><ellipse cx="648.9" cy="154.3" rx="4.2" ry="2.3" transform="rotate(43 648.9 154.3)" fill="#dcdcdc" stroke="#8e8e8e" stroke-width=".9"/>
<path d="M661.8,153.6 H655.4 M657.4,150.8 L653.8,153.6 L657.4,156.4Z" stroke="#3d86b4" stroke-width="1.6" fill="#3d86b4" stroke-linejoin="round"/>
<!-- section view -->
<path d="M668.6,147 Q668.8,143.4 676,143.2 Q683.6,143.4 684,146.2 L684,154.6 L680.2,156 V148.6 Q677.6,147.4 675.2,148.8 V156.2 L668.6,157.4Z" fill="#e4e4e4" stroke="#8a8a8a" stroke-width=".8" stroke-linejoin="round"/>
<path d="M668.8,147.6 L675,148.8 V156.4 L668.8,157.4Z" fill="url(#hatch)" stroke="#2f6f9c" stroke-width=".6"/>
<path d="M680.2,148.4 L684,146.6 V154.6 L680.2,156Z" fill="url(#hatch)" stroke="#2f6f9c" stroke-width=".6"/>
<path d="M675.2,148.8 Q677.6,147.4 680.2,148.6 V156 Q677.6,157.6 675.2,156.2Z" fill="#d0d0d0"/>
<!-- dynamic annotation -->
<path d="M703.8,142.2 L706.6,144.8 L696.6,157.0 L690.4,151.2Z" fill="url(#scopeg)" stroke="#8e8e8e" stroke-width=".9" stroke-linejoin="round"/><path d="M700.4,145.0 L704.0,148.2 M696.6,147.8 L701.2,152.0" stroke="#9a9a9a" stroke-width=".8"/><ellipse cx="693.5" cy="154.1" rx="4.2" ry="2.3" transform="rotate(43 693.5 154.1)" fill="#dcdcdc" stroke="#8e8e8e" stroke-width=".9"/>
<path d="M696.4,142 L701.6,142.4 L698.8,145.2 L700.8,145.6 L692.4,151.6 L695,147.4 L693,147Z" fill="#f6d03a" stroke="#e07a20" stroke-width=".9" stroke-linejoin="round"/>
<text x="699.6" y="157.6" font-family="Liberation Serif,serif" font-size="9.5" fill="#3d86b4">A</text>
<!-- cube partial -->
<path d="M714.4,147 L718,142.4 H721 V157.4 H714.4Z" fill="#f0f0f0" stroke="#777" stroke-width=".8"/>
<rect x="714.4" y="147" width="8" height="10.4" fill="#8cc4e8" stroke="#2f78ac" stroke-width=".9"/>
</svg>
<!--VT1-->
<!--VW1-->
</div>
<div class="abs" style="left:8px;top:136px;width:712px;height:1px;background:#8e8e8e"></div>
<div class="abs" style="left:8px;top:137px;width:236px;height:1px;background:#c4ced2"></div>
<div id="dlg" class="abs"><div id="dlgtitle" class="abs"></div>
<!--DG0--><!-- dialog origin abs (8,0) -->
<div class="abs" id="ttl" style="left:29.5px;top:4px;font-size:13.6px;line-height:22px;color:#8e8e8e;white-space:nowrap"><span id="t1">测量</span><span id="t2" style="font-size:13px"> - </span><span id="t3" style="font-size:13px;letter-spacing:.05px">step.SLDPRT</span></div>
<!-- title icon abs 15.5..33 x 7..22.5 -->
<svg style="left:7px;top:6px" width="19" height="17" viewBox="0 0 19 17"><path d="M1 11.8 L7.8 10.8 L8 13.4 L1.3 15.6Z" fill="#e2bc2c" stroke="#7a5c00" stroke-width=".7"/><path d="M1 11.6 L1.4 15.8" stroke="#2a2000" stroke-width="1"/><path d="M3.8 9.4 Q3.8 1 11.4 .8 H14.2 Q17.8 .8 17.8 4.2 V10.6 Q17.8 13.8 14.4 13.8 H7.4 Q3.8 13.8 3.8 10Z" fill="#3a82b2" stroke="#18486a" stroke-width="1"/><path d="M5.2 9.4 Q5.2 2.4 11.6 2.2 H13.6 Q8.2 3.6 7.6 9 Q7.4 11.4 8.4 12.4 H7.4 Q5.2 12.4 5.2 10Z" fill="#7cc2e8" fill-opacity=".8"/><path d="M9 12.4 Q8 8 10.6 5 Q13 3 16.4 3.6" fill="none" stroke="#20587e" stroke-width=".8" opacity=".7"/><ellipse cx="12.5" cy="8.5" rx="2.5" ry="2.9" fill="#f6d83a" stroke="#6a5200" stroke-width=".8"/><ellipse cx="12.1" cy="7.8" rx="1.1" ry="1.3" fill="#fff6a0" opacity=".8"/></svg>
<div class="abs" style="left:488px;top:4px;width:12px;font-size:14px;line-height:22px;color:#9a9a9a;text-align:center">?</div>
<svg style="left:536px;top:9px" width="12" height="12" viewBox="0 0 12 12"><path d="M.5 .5 L11.5 11.5 M11.5 .5 L.5 11.5" stroke="#8c8c8c" stroke-width="1"/></svg>
<!-- pin + chevron -->
<svg style="left:527px;top:37px" width="11" height="11" viewBox="0 0 11 11"><path d="M6 .8 L10.2 5 L8.6 5.2 L6.6 7.2 L6.4 9.4 L1.6 4.6 L3.8 4.4 L5.8 2.4Z" fill="#8a8a8a"/><path d="M3.6 7.4 L.8 10.2" stroke="#8a8a8a" stroke-width="1.1"/></svg>
<svg style="left:551px;top:39px" width="11" height="7" viewBox="0 0 11 7"><path d="M1 1 L5.5 5.5 L10 1" fill="none" stroke="#555" stroke-width="1.5"/></svg>
<!-- toolbar -->
<div class="abs" style="left:64px;top:31px;width:23px;height:23px;background:#b6b6b6;border:1px solid #868686"></div>
<div class="abs" style="left:87px;top:31px;width:24px;height:23px;background:#b6b6b6;border:1px solid #868686;border-left:none"></div>
<!-- glasses gray abs 15..29.5 -->
<svg style="left:7px;top:35px;opacity:.6" width="15" height="15" viewBox="0 0 15 15"><path d="M.4 2.5 H14 M.5 2 V8 M13.8 2 V8 M2.6 13.5 H11 M3 11 V14.4 M10.6 11 V14.4" fill="none" stroke="#b0b0b0" stroke-width=".8"/><circle cx="3.2" cy="8.3" r="2.7" fill="none" stroke="#a8a8a8" stroke-width=".9"/><circle cx="10.6" cy="8.3" r="2.7" fill="none" stroke="#a8a8a8" stroke-width=".9"/></svg>
<div class="dd" style="left:30px;top:40.5px;border-top-color:#8a8a8a"></div>
<div class="abs" style="left:44px;top:34.5px;width:16px;font-size:9.5px;line-height:9px;font-weight:bold;color:#1a1a1a;text-align:center;letter-spacing:-.3px">in<br>mm</div>
<!-- xyz eye icon abs 72..95 -->
<svg style="left:66px;top:33px" width="20" height="19" viewBox="0 0 20 19"><g font-family="Liberation Sans,sans-serif" font-weight="bold" font-size="7.6" fill="#2585bd" stroke="#2585bd" stroke-width=".4"><text x=".8" y="7.6">X</text><text x="7.4" y="12">Y</text><text x="12.6" y="15.2">Z</text></g><path d="M.8 13.8 Q6 8.6 11.2 13.8 Q6 18.4 .8 13.8Z" fill="#fff" stroke="#222" stroke-width="1"/><path d="M3.6 11.6 Q6 10.4 8.4 11.6 Q8.6 15 6 15.2 Q3.4 15 3.6 11.6Z" fill="#2a2a2a"/></svg>
<!-- point to point ruler icon abs 95..118 -->
<svg style="left:89px;top:33px" width="20" height="19" viewBox="0 0 20 19"><path d="M4.2 11.2 L13 4.4 L17.8 9.6 L8.6 17.6Z" fill="#d8b024" stroke="#3a3000" stroke-width="1.1" stroke-linejoin="round"/><path d="M6.2 12 L15 5.4" stroke="#f4dc60" stroke-width="1.4" opacity=".8"/><path d="M8.4 12.4 L10 14.2 M10.6 10.6 L12.4 12.6 M12.8 8.8 L14.4 10.6" stroke="#3a3000" stroke-width=".9"/><path d="M3.2 9.4 L9.6 3.2" stroke="#222" stroke-width="1"/><rect x="1.6" y="7.8" width="3.2" height="3.2" fill="#3a96d0" stroke="#12507e" stroke-width=".7"/><rect x="8" y="1.4" width="3.2" height="3.2" fill="#3a96d0" stroke="#12507e" stroke-width=".7"/></svg>
<!-- select icon abs 124.7..140 x 35.3..50.8 -->
<svg style="left:116px;top:35px" width="17" height="17" viewBox="0 0 17 17"><path d="M.8 3.4 L14.4 .8 V13 L.8 15.6Z" fill="#fbfbfb" stroke="#5a5a5a" stroke-width="1.1" stroke-linejoin="round"/><path d="M6.2 6.2 H11 L9.4 7.8 L15.6 14 L14 15.6 L7.8 9.4 L6.2 11Z" fill="#2d7fb8"/></svg>
<div class="dd" style="left:141.5px;top:40.5px"></div>
<!-- tape w/ clock icon abs 162.5..178.3 x 34..51 -->
<svg style="left:154px;top:33.5px" width="17" height="18" viewBox="0 0 17 18"><g transform="translate(-.6,0) scale(.93)"><path d="M1 11.8 L7.8 10.8 L8 13.4 L1.3 15.6Z" fill="#e2bc2c" stroke="#7a5c00" stroke-width=".7"/><path d="M1 11.6 L1.4 15.8" stroke="#2a2000" stroke-width="1"/><path d="M3.8 9.4 Q3.8 1 11.4 .8 H14.2 Q17.8 .8 17.8 4.2 V10.6 Q17.8 13.8 14.4 13.8 H7.4 Q3.8 13.8 3.8 10Z" fill="#3a82b2" stroke="#18486a" stroke-width="1"/><path d="M5.2 9.4 Q5.2 2.4 11.6 2.2 H13.6 Q8.2 3.6 7.6 9 Q7.4 11.4 8.4 12.4 H7.4 Q5.2 12.4 5.2 10Z" fill="#7cc2e8" fill-opacity=".8"/><path d="M9 12.4 Q8 8 10.6 5 Q13 3 16.4 3.6" fill="none" stroke="#20587e" stroke-width=".8" opacity=".7"/><ellipse cx="12.5" cy="8.5" rx="2.5" ry="2.9" fill="#f6d83a" stroke="#6a5200" stroke-width=".8"/><ellipse cx="12.1" cy="7.8" rx="1.1" ry="1.3" fill="#fff6a0" opacity=".8"/></g><circle cx="12.4" cy="13.6" r="3.5" fill="#fff" stroke="#555" stroke-width=".9"/><path d="M12.4 11.4 V13.8 L14.2 14.4" fill="none" stroke="#333" stroke-width=".8"/></svg>
<div class="abs" style="left:176px;top:33px;width:1px;height:19px;background:#b8b8b8"></div>
<!-- chart gray abs 191..207 x 35..50 -->
<svg style="left:183px;top:35px;opacity:.7" width="17" height="16" viewBox="0 0 17 16"><rect x=".6" y=".6" width="15.4" height="14.6" fill="#f4f4f4" stroke="#c2c2c2" stroke-width="1"/><path d="M2 11.4 L5.4 7 L7.8 10.4 L11.4 3.6 L14.6 8.4" fill="none" stroke="#c2c2c2" stroke-width="1.3"/></svg>
<!--DG1-->
</div>
</body></html>
